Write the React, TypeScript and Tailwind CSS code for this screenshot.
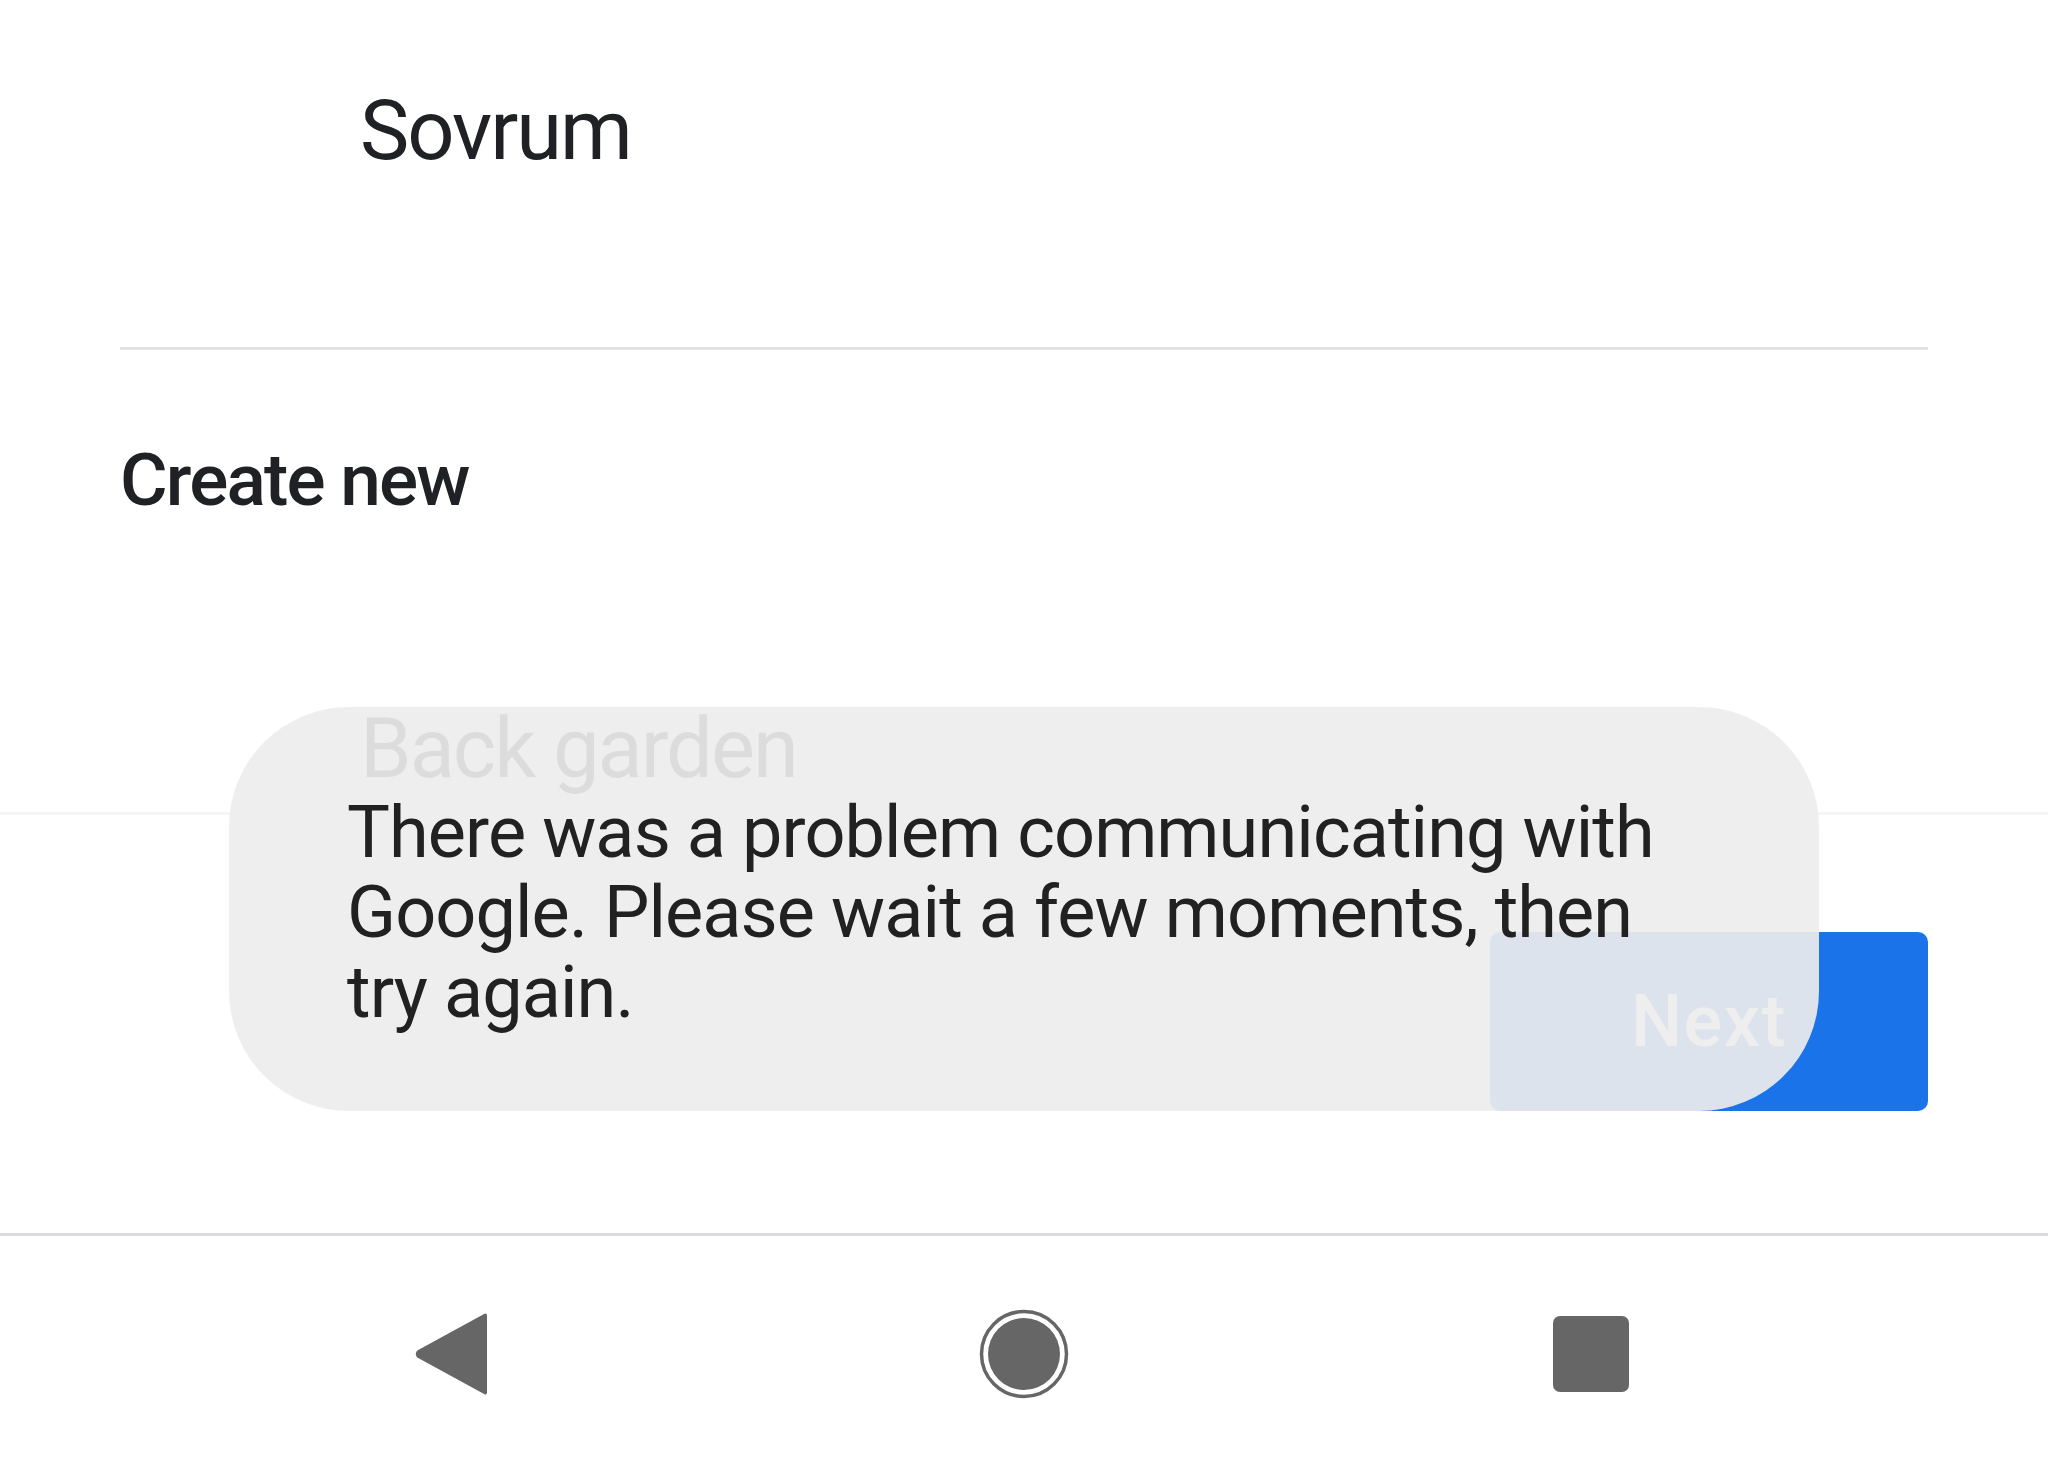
import React from "react";

function BackIcon() {
  return (
    <svg width="72" height="82" viewBox="0 0 72 82" fill="#666666">
      <path d="M70 0.5 C71.3 0.5 72 1.4 72 2.8 L72 79.2 C72 80.6 71.3 81.5 70 81.5 L3.2 45 C0 43 0 39 3.2 37 Z" />
    </svg>
  );
}

function HomeIcon() {
  return (
    <svg width="90" height="90" viewBox="0 0 90 90">
      <circle cx="45" cy="45" r="42.5" fill="none" stroke="#666666" strokeWidth="3.5" />
      <circle cx="45" cy="45" r="36" fill="#666666" />
    </svg>
  );
}

function RecentsIcon() {
  return <div className="size-[76px] rounded-[7px] bg-[#666666]" />;
}

export default function App() {
  return (
    <div className="relative flex h-[1471px] w-[2048px] flex-col overflow-hidden bg-white font-['Roboto',sans-serif]">
      {/* Screen content */}
      <div className="flex h-[1233px] flex-col">
        <div className="pl-[360px] pt-[89px] text-[83px] leading-none tracking-[-2px] text-[#202124]">Sovrum</div>

        <div className="mx-[120px] mt-[175px] h-[3px] bg-[#e3e3e6]" />

        <div className="pl-[120px] pt-[94px] text-[73px] font-medium leading-none tracking-[-1.8px] text-[#202124]">
          Create new
        </div>

        <div className="pl-[360px] pt-[190px] text-[83px] leading-none tracking-[-2px] text-[#202124]">Back garden</div>

        <div className="mt-[22px] h-[3px] bg-[#f5f5f5]" />

        <div className="flex justify-end pr-[120px] pt-[117px]">
          <button className="flex h-[179px] w-[438px] items-center justify-center rounded-[10px] bg-[#1a73e8] text-[72px] font-medium leading-none tracking-[1.6px] text-white">
            Next
          </button>
        </div>
      </div>

      <div className="h-[3px] bg-[#dadce0]" />

      {/* System navigation */}
      <div className="flex flex-1 items-center justify-center gap-[367px]">
        <div className="flex w-[200px] justify-center pr-[12px]">
          <BackIcon />
        </div>
        <div className="flex w-[200px] justify-center">
          <HomeIcon />
        </div>
        <div className="flex w-[200px] justify-center">
          <RecentsIcon />
        </div>
      </div>

      {/* Toast */}
      <div className="absolute left-[229px] top-[707px] flex h-[404px] w-[1590px] items-center rounded-[120px] bg-[#ededed]/[0.92] pl-[118px] pr-[100px] pt-[8px]">
        <p className="text-[72px] leading-[80px] tracking-[-0.9px] text-[#212121]">
          There was a problem communicating with Google. Please wait a few moments, then try again.
        </p>
      </div>
    </div>
  );
}
